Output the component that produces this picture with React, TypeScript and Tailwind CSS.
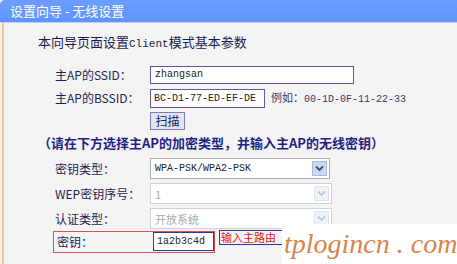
const cjk = "font-['Noto_Sans_CJK_SC','Noto_Sans',sans-serif]";
const mono = "font-['Liberation_Mono','Noto_Sans_CJK_SC',monospace]";

function Arrow({ disabled }: { disabled?: boolean }) {
  return (
    <div
      className={`w-[15px] h-[15px] flex items-center justify-center border ${
        disabled ? "bg-[#eef2f9] border-[#dde4ef]" : "bg-[#c9d9f2] border-[#a6bbe0]"
      }`}
    >
      <svg width="9" height="7" viewBox="0 0 9 7">
        <path
          d="M1 1.5 L4.5 5 L8 1.5"
          fill="none"
          stroke={disabled ? "#b9c8de" : "#3a4f86"}
          strokeWidth="1.8"
        />
      </svg>
    </div>
  );
}

function Select({ value, disabled, width }: { value: string; disabled?: boolean; width: string }) {
  return (
    <div
      className={`${width} h-[21px] flex items-center justify-between bg-white border pl-[4px] pr-[2px] ${
        disabled ? "border-[#cfcfd6]" : "border-[#a9a9b8]"
      }`}
    >
      <span
        className={`leading-[16px] ${disabled ? "text-[11px] text-[#a8a8a8] " + cjk : "text-[10px] text-[#222] " + mono}`}
      >
        {value}
      </span>
      <Arrow disabled={disabled} />
    </div>
  );
}

function Label({ text }: { text: string }) {
  return <div className={`w-[95px] text-[12px] leading-[16px] text-[#1e1e55] ${cjk}`}>{text}</div>;
}

export default function App() {
  return (
    <div className="w-[457px] h-[264px] relative overflow-hidden bg-[#f4f4f4]">
      {/* title bar */}
      <div className={`h-[23px] rounded-tl-[5px] bg-gradient-to-b from-[#6b9dff] to-[#5f95fb] border-b border-[#b8cffc] pl-[10px] text-white text-[13px] leading-[22px] whitespace-pre ${cjk}`}>
        设置向导 - 无线设置
      </div>

      <div className="ml-[2px] border-l-2 border-[#f5c68e] h-[241px]">
        <div className={`pt-[11px] pl-[34px] text-[13px] leading-[16px] text-[#1c1c4c] ${cjk}`}>
          本向导页面设置<span className={`${mono} text-[11px]`}>Client</span>模式基本参数
        </div>

        <div className="pl-[51px]">
          <div className="mt-[14px] h-[18px] flex items-center">
            <Label text="主AP的SSID：" />
            <div className={`w-[204px] h-[18px] bg-white border border-[#5c5ca6] pl-[4px] text-[10px] leading-[16px] text-[#222] ${mono}`}>
              zhangsan
            </div>
          </div>

          <div className="mt-[4px] h-[20px] flex items-center">
            <Label text="主AP的BSSID：" />
            <div className={`w-[115px] h-[19px] bg-white border border-[#5c5ca6] pl-[3px] text-[10px] leading-[17px] text-[#222] ${mono}`}>
              BC-D1-77-ED-EF-DE
            </div>
            <div className={`ml-[6px] text-[11px] leading-[16px] text-[#3a3a6a] ${cjk}`}>
              例如：<span className={`${mono} text-[10px]`}>00-1D-0F-11-22-33</span>
            </div>
          </div>

          <div className="mt-[4px] h-[18px] flex items-center">
            <div className="w-[95px]" />
            <div className={`w-[35px] h-[18px] bg-[#dfe5f3] border border-[#7c7cb2] flex items-center justify-center text-[12px] leading-[14px] text-[#222255] ${cjk}`}>
              扫描
            </div>
          </div>
        </div>

        <div className={`mt-[5px] pl-[34px] h-[16px] text-[13px] leading-[16px] font-bold text-[#1f1f86] ${cjk}`}>
          （请在下方选择主AP的加密类型，并输入主AP的无线密钥）
        </div>

        <div className="pl-[51px]">
          <div className="mt-[7px] h-[21px] flex items-center">
            <Label text="密钥类型：" />
            <Select width="w-[180px]" value="WPA-PSK/WPA2-PSK" />
          </div>
          <div className="mt-[4px] h-[21px] flex items-center">
            <Label text="WEP密钥序号：" />
            <Select width="w-[182px]" value="1" disabled />
          </div>
          <div className="mt-[4px] h-[21px] flex items-center">
            <Label text="认证类型：" />
            <Select width="w-[182px]" value="开放系统" disabled />
          </div>
        </div>

        <div className="mt-[1px] pl-[49px] flex items-center">
          <div className="w-[162px] h-[22px] border border-[#e05050] flex items-center pl-[3px]">
            <div className={`w-[96px] text-[12px] leading-[16px] text-[#1e1e55] ${cjk}`}>密钥：</div>
            <div className={`w-[61px] h-[19px] bg-white border border-[#3434a0] pl-[3px] text-[10px] leading-[17px] text-[#222] ${mono}`}>
              1a2b3c4d
            </div>
          </div>
          <div className="ml-[4px] mb-[8px] w-[64px] border-y border-l border-[#3434a0]">
            <div className={`pl-[1px] whitespace-nowrap text-[11px] leading-[13px] text-[#e01818] ${cjk}`}>
              输入主路由
            </div>
          </div>
        </div>
      </div>

      {/* watermark */}
      <div className="absolute left-[282px] top-[224px] w-[175px] h-[40px] bg-white flex items-center pl-[2px]">
        <span className="font-['Liberation_Serif',serif] italic text-[28px] leading-[32px] text-[#d4864a] whitespace-pre">
          tplogincn . com
        </span>
      </div>
    </div>
  );
}
